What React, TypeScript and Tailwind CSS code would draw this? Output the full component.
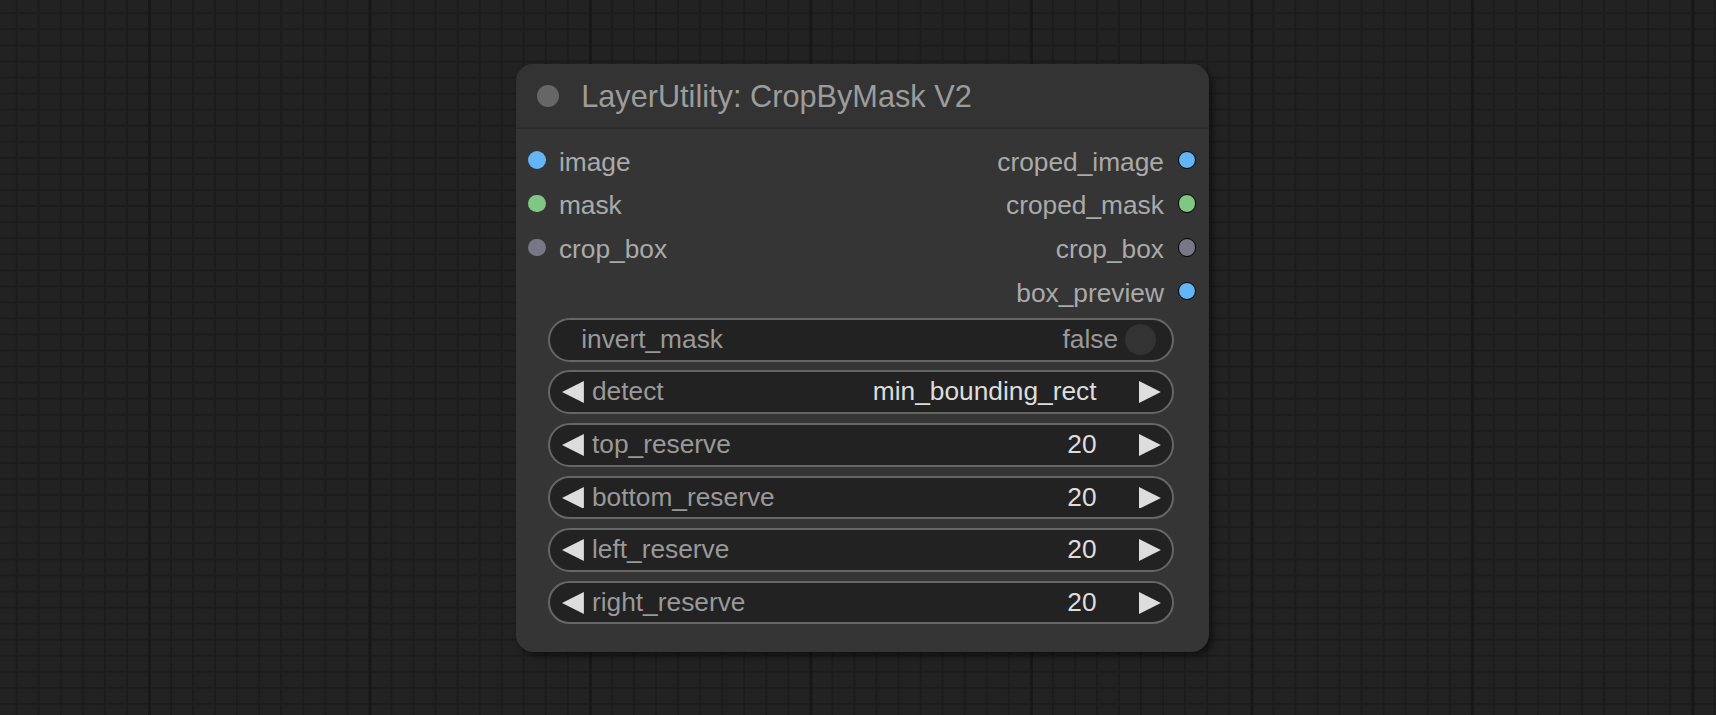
import React from "react";

const slotColors = {
  image: "#64b5f6",
  mask: "#81c784",
  box: "#777788",
};

function InDot({ color }: { color: string }) {
  return (
    <span
      className="block w-[17.6px] h-[17.6px] rounded-full shrink-0"
      style={{ backgroundColor: color }}
    />
  );
}

function OutDot({ color }: { color: string }) {
  return (
    <span
      className="block w-[18.4px] h-[18.4px] rounded-full shrink-0 border-[1.8px] border-black box-border"
      style={{ backgroundColor: color }}
    />
  );
}

function LeftArrow() {
  return (
    <svg viewBox="0 0 10 10" className="w-[21.9px] h-[21.9px] shrink-0">
      <polygon points="10,0 0,5 10,10" fill="#dddddd" />
    </svg>
  );
}

function RightArrow() {
  return (
    <svg viewBox="0 0 10 10" className="w-[21.9px] h-[21.9px] shrink-0">
      <polygon points="0,0 10,5 0,10" fill="#dddddd" />
    </svg>
  );
}

function SlotRow({
  input,
  output,
}: {
  input?: { name: string; color: string };
  output?: { name: string; color: string };
}) {
  return (
    <div className="h-[43.8px] flex items-center justify-between">
      <div className="flex items-center pl-[12.8px]">
        {input && (
          <>
            <InDot color={input.color} />
            <span className="ml-[13px] text-[26.3px] leading-[40px] pt-[3.7px] text-[#aaaaaa] whitespace-nowrap">
              {input.name}
            </span>
          </>
        )}
      </div>
      <div className="flex items-center pr-[12.2px]">
        {output && (
          <>
            <span className="mr-[14px] text-[26.3px] leading-[40px] pt-[3.7px] text-[#aaaaaa] whitespace-nowrap">
              {output.name}
            </span>
            <OutDot color={output.color} />
          </>
        )}
      </div>
    </div>
  );
}

function ToggleWidget({ label, value }: { label: string; value: string }) {
  return (
    <div className="h-[43.8px] rounded-full border-2 border-[#666666] bg-[#222222] flex items-center pl-[31.7px] pr-[15.2px]">
      <span className="flex-1 text-[26.3px] leading-[43.8px] text-[#999999] whitespace-nowrap">
        {label}
      </span>
      <span className="text-[26.3px] leading-[43.8px] text-[#999999] whitespace-nowrap">
        {value}
      </span>
      <span className="ml-[7px] block w-[31.3px] h-[31.3px] rounded-full bg-[#333333] shrink-0" />
    </div>
  );
}

function ArrowWidget({ label, value }: { label: string; value: string }) {
  return (
    <div className="h-[43.8px] rounded-full border-2 border-[#666666] bg-[#222222] flex items-center pl-[12.2px] pr-[11px]">
      <LeftArrow />
      <span className="ml-[8.4px] flex-1 text-[26.3px] leading-[43.8px] text-[#999999] whitespace-nowrap">
        {label}
      </span>
      <span className="mr-[42.1px] text-[26.3px] leading-[43.8px] text-[#dddddd] whitespace-nowrap">
        {value}
      </span>
      <RightArrow />
    </div>
  );
}

export default function App() {
  return (
    <div
      className="relative w-[1716px] h-[715px] overflow-hidden bg-[#222222] [font-family:'Liberation_Sans',Arial,sans-serif]
      [background-image:linear-gradient(to_right,#181818_3px,transparent_3px),linear-gradient(to_right,#1c1c1c_2px,transparent_2px),linear-gradient(to_bottom,#1c1c1c_2px,transparent_2px)]
      [background-size:220.5px_100%,22.05px_100%,100%_16.07px]
      [background-position:148px_0,15.7px_0,0_12.3px]"
    >
      <div className="absolute left-[515.5px] top-[63.5px] w-[693px] h-[588.5px] rounded-[17.5px] bg-[#353535] shadow-[4px_4px_7px_rgba(0,0,0,0.5)] flex flex-col overflow-hidden">
        {/* Title */}
        <div className="h-[65.7px] shrink-0 bg-[#333333] shadow-[inset_0_-1.5px_0_#2a2a2a] flex items-center pl-[21.9px]">
          <span className="block w-[21.9px] h-[21.9px] rounded-full bg-[#666666] shrink-0" />
          <span className="ml-[21.9px] text-[30.7px] leading-[65.7px] text-[#9c9c9c] whitespace-nowrap">
            LayerUtility: CropByMask V2
          </span>
        </div>

        {/* Slots */}
        <div className="pt-[8.76px] flex flex-col">
          <SlotRow
            input={{ name: "image", color: slotColors.image }}
            output={{ name: "croped_image", color: slotColors.image }}
          />
          <SlotRow
            input={{ name: "mask", color: slotColors.mask }}
            output={{ name: "croped_mask", color: slotColors.mask }}
          />
          <SlotRow
            input={{ name: "crop_box", color: slotColors.box }}
            output={{ name: "crop_box", color: slotColors.box }}
          />
          <SlotRow output={{ name: "box_preview", color: slotColors.image }} />
        </div>

        {/* Widgets */}
        <div className="mt-[4.8px] ml-[32px] mr-[35px] flex flex-col gap-[8.76px]">
          <ToggleWidget label="invert_mask" value="false" />
          <ArrowWidget label="detect" value="min_bounding_rect" />
          <ArrowWidget label="top_reserve" value="20" />
          <ArrowWidget label="bottom_reserve" value="20" />
          <ArrowWidget label="left_reserve" value="20" />
          <ArrowWidget label="right_reserve" value="20" />
        </div>
      </div>
    </div>
  );
}
